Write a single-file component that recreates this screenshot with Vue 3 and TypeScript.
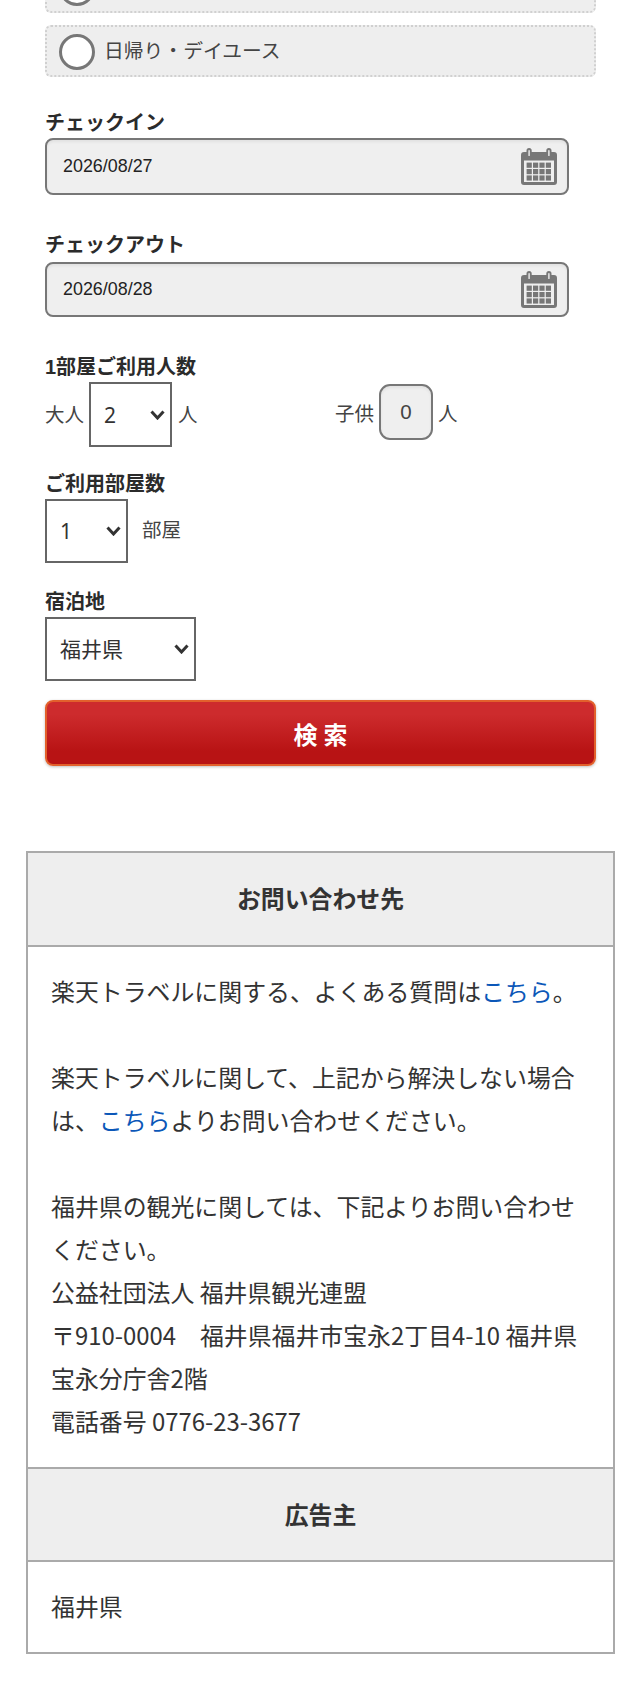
<script setup lang="ts">
const adults = ['1', '2', '3', '4']
const rooms = ['1', '2', '3']
const dates = [
  { label: 'チェックイン', value: '2026/08/27', cls: 'tall' },
  { label: 'チェックアウト', value: '2026/08/28', cls: 'short' },
]
const cells = [0, 1, 2].flatMap((r) => [0, 1, 2, 3].map((c) => ({ x: 5.6 + c * 6.4, y: 14.6 + r * 6.4 })))
</script>

<template>
  <div class="page">
    <form class="search" @submit.prevent>
      <div class="stay stay-clipped"><span class="radio"></span></div>
      <div class="stay"><span class="radio"></span><span class="stay-text">日帰り・デイユース</span></div>

      <div v-for="d in dates" :key="d.label" class="field" :class="d.cls">
        <div class="label">{{ d.label }}</div>
        <div class="date">
          <input class="date-input" type="text" readonly :value="d.value" />
          <svg class="cal" viewBox="0 0 36 37" aria-hidden="true">
            <path
              fill="#777"
              fill-rule="evenodd"
              d="M3 4h2.5V2.6a2.6 2.6 0 0 1 5.2 0V4h14.6V2.6a2.6 2.6 0 0 1 5.2 0V4H33a3 3 0 0 1 3 3v27a3 3 0 0 1-3 3H3a3 3 0 0 1-3-3V7a3 3 0 0 1 3-3ZM7.4 2.8v4.6a.7.7 0 0 0 1.4 0V2.8a.7.7 0 0 0-1.4 0Zm19.8 0v4.6a.7.7 0 0 0 1.4 0V2.8a.7.7 0 0 0-1.4 0ZM3 12.6v21.4h30V12.6Z"
            />
            <rect v-for="(c, i) in cells" :key="i" :x="c.x" :y="c.y" width="5.2" height="5.2" fill="#777" />
          </svg>
        </div>
      </div>

      <div class="field people">
        <div class="label">1部屋ご利用人数</div>
        <div class="people-row">
          <div class="group group-adult">
            <span>大人</span>
            <select class="sel sel-num"><option v-for="n in adults" :key="n" :selected="n === '2'">{{ n }}</option></select>
            <span class="unit">人</span>
          </div>
          <div class="group group-child">
            <span>子供</span>
            <input class="child" type="text" readonly value="0" />
            <span class="unit">人</span>
          </div>
        </div>
      </div>

      <div class="field compact">
        <div class="label">ご利用部屋数</div>
        <div class="group">
          <select class="sel sel-num"><option v-for="n in rooms" :key="n">{{ n }}</option></select>
          <span class="room-unit">部屋</span>
        </div>
      </div>

      <div class="field compact pref">
        <div class="label label-pref">宿泊地</div>
        <select class="sel sel-pref"><option>福井県</option></select>
      </div>

      <button class="submit" type="submit">検索</button>
    </form>

    <section class="info">
      <h2 class="head">お問い合わせ先</h2>
      <div class="body">
        <p>楽天トラベルに関する、よくある質問は<a href="#">こちら</a>。</p>
        <p>楽天トラベルに関して、上記から解決しない場合は、<a href="#">こちら</a>よりお問い合わせください。</p>
        <p>
          福井県の観光に関しては、下記よりお問い合わせください。<br />
          公益社団法人 福井県観光連盟<br />
          〒910-0004　福井県福井市宝永2丁目4-10 福井県宝永分庁舎2階<br />
          電話番号 0776-23-3677
        </p>
      </div>
      <h2 class="head">広告主</h2>
      <div class="body"><p>福井県</p></div>
    </section>
  </div>
</template>

<style>
html, body { margin: 0; padding: 0; background: #fff; }
</style>

<style scoped>
.page {
  width: 640px;
  height: 1690px;
  overflow: hidden;
  font-family: "Liberation Sans", "Noto Sans CJK JP", sans-serif;
  color: #333;
  box-sizing: border-box;
}
.search { padding: 0 44px 0 45px; }
.stay {
  display: flex;
  align-items: center;
  gap: 9px;
  height: 52px;
  box-sizing: border-box;
  margin-bottom: 12px;
  padding: 0 12px;
  background: #eee;
  border: 2px dotted #d0d0d0;
  border-radius: 6px;
  font-size: 19.8px;
  color: #444;
}
.stay-clipped { margin-top: -39px; }
.stay-text { margin-bottom: 4px; }
.radio {
  width: 36px;
  height: 36px;
  box-sizing: border-box;
  border: 3px solid #777;
  border-radius: 50%;
  background: #fff;
  flex: none;
  position: relative;
  top: 1px;
}
.label {
  font-size: 20px;
  line-height: 26px;
  height: 24px;
  font-weight: 700;
  color: #2b2b2b;
  margin-bottom: 4px;
}
.field.tall { margin-top: 33px; }
.field.short { margin-top: 37px; }
.field.short .label { margin-bottom: 6px; }
.date { position: relative; width: 524px; }
.date-input {
  display: block;
  width: 100%;
  box-sizing: border-box;
  padding: 0 0 0 16px;
  background: #efefef;
  border: 2px solid #777;
  border-radius: 8px;
  font: 17.9px "Liberation Sans", sans-serif;
  color: #222;
  box-shadow: inset 0 2px 3px rgba(0, 0, 0, 0.06);
  outline: none;
}
.tall .date-input { height: 57px; }
.short .date-input { height: 55px; }
.cal {
  position: absolute;
  right: 12px;
  top: 10px;
  width: 36px;
  height: 37px;
}
.short .cal { top: 9px; }
.people { margin-top: 37px; }
.people-row { display: flex; }
.group {
  display: flex;
  align-items: center;
  font-size: 19.5px;
  color: #444;
}
.group-adult { width: 290px; gap: 5px; }
.group-adult .unit { margin-left: 1px; margin-top: -3px; }
.group-adult > span:first-child { margin-top: -3px; }
.group-child { gap: 5px; height: 56px; margin-top: 2px; }
.child {
  width: 54px;
  height: 56px;
  box-sizing: border-box;
  padding: 0;
  text-align: center;
  background: #efefef;
  border: 2px solid #777;
  border-radius: 11px;
  font: 20.5px "Liberation Sans", sans-serif;
  color: #444;
  box-shadow: inset 0 2px 3px rgba(0, 0, 0, 0.06);
  outline: none;
}
.compact { margin-top: 24px; }
.room-unit { margin-left: 14px; margin-top: -6px; }
.pref { margin-top: 26px; }
.label-pref { margin-bottom: 4px; }
.sel {
  display: block;
  box-sizing: border-box;
  height: 65px;
  padding: 0 0 0 13px;
  appearance: none;
  background: #fff url("data:image/svg+xml,%3Csvg xmlns='http://www.w3.org/2000/svg' width='15' height='10' viewBox='0 0 15 10'%3E%3Cpath d='M1.5 1.5 7.5 8l6-6.5' fill='none' stroke='%23333' stroke-width='3'/%3E%3C/svg%3E") no-repeat right 5.5px center;
  border: 2px solid #666;
  border-radius: 0;
  font: 21px "Noto Sans", "Noto Sans CJK JP", sans-serif;
  color: #333;
  outline: none;
}
.compact .sel { height: 64px; }
.sel-num { width: 83px; }
.sel-pref { width: 151px; }
.submit {
  display: block;
  width: 100%;
  height: 66px;
  margin-top: 19px;
  box-sizing: border-box;
  border: 2px solid #e2602c;
  border-radius: 8px;
  background: linear-gradient(#cd2b2d 20%, #b81314 80%);
  box-shadow: 0 1px 3px rgba(0, 0, 0, 0.25);
  color: #fff;
  font: 700 24px "Noto Sans CJK JP", sans-serif;
  letter-spacing: 6px;
  text-indent: 6px;
}
.info {
  width: 589px;
  margin: 85px 0 0 26px;
  box-sizing: border-box;
  border: 2px solid #aaa;
  font-family: "Noto Sans CJK JP", sans-serif;
  font-size: 23.9px;
  line-height: 43px;
  color: #333;
}
.head {
  margin: 0;
  height: 92px;
  line-height: 89px;
  font-size: 23.9px;
  font-weight: 700;
  text-align: center;
  background: #eee;
  border-bottom: 2px solid #aaa;
}
.body + .head { height: 91px; border-top: 2px solid #aaa; line-height: 90px; }
.body { padding: 22px 23px 25px; }
.body p { margin: 0 0 43px; }
.body p:last-child { margin-bottom: 0; }
.body a { color: #0b57b8; text-decoration: none; }
</style>
